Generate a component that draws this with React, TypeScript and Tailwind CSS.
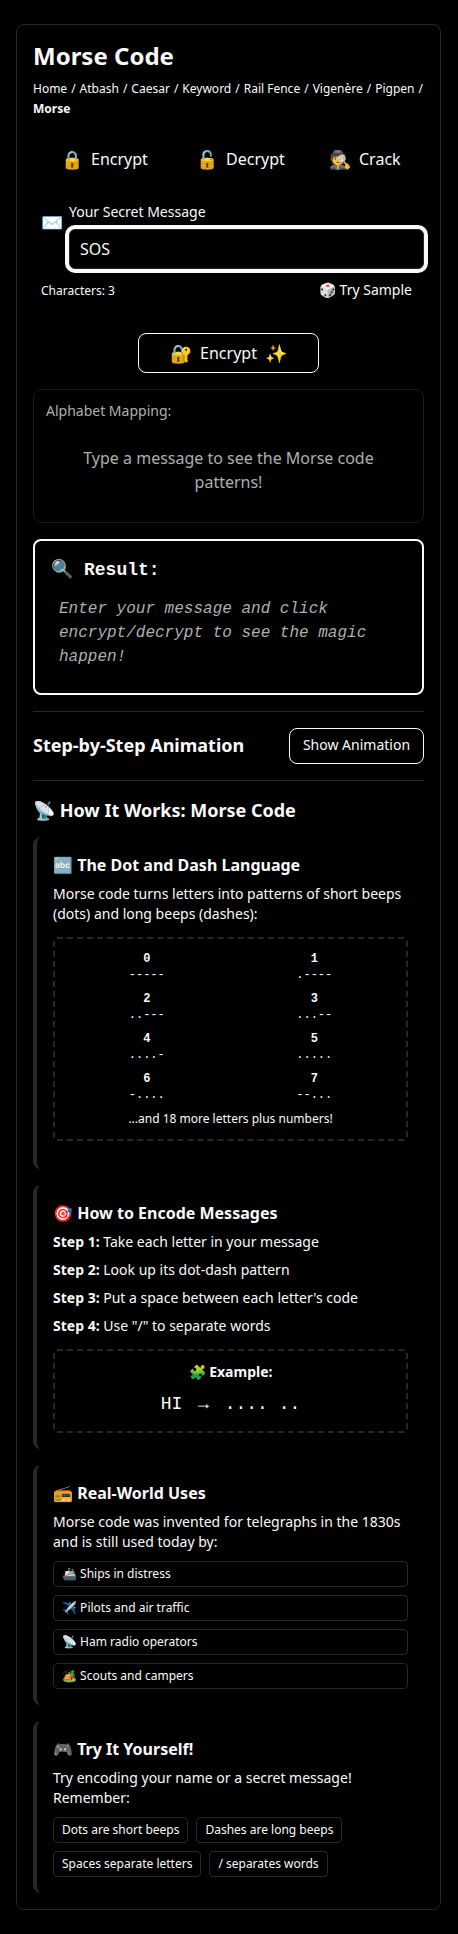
import type { ReactNode } from "react";

const crumbs = ["Home", "Atbash", "Caesar", "Keyword", "Rail Fence", "Vigenère", "Pigpen"];

const digits = [
  ["0", "-----"],
  ["1", ".----"],
  ["2", "..---"],
  ["3", "...--"],
  ["4", "....-"],
  ["5", "....."],
  ["6", "-...."],
  ["7", "--..."],
];

const steps = [
  "Take each letter in your message",
  "Look up its dot-dash pattern",
  "Put a space between each letter's code",
  'Use "/" to separate words',
];

const uses = ["🚢 Ships in distress", "✈️ Pilots and air traffic", "📡 Ham radio operators", "🏕️ Scouts and campers"];

const tips = ["Dots are short beeps", "Dashes are long beeps", "Spaces separate letters", "/ separates words"];

const mono = "font-['Liberation_Mono',monospace]";

function Section({ title, className = "mt-4 pb-4", children }: { title: string; className?: string; children: ReactNode }) {
  return (
    <section className={`rounded-lg border-l-4 border-[#27272a] px-4 pt-4 ${className}`}>
      <h4 className="mb-[7px] text-base leading-6 font-bold">{title}</h4>
      {children}
    </section>
  );
}

export default function App() {
  return (
    <div className="min-h-[1934px] bg-black pt-6 font-['Noto_Sans',sans-serif] text-[#fafafa]">
      <main className="ml-4 h-[1886px] w-[425px] rounded-lg border border-[#27272a] px-4 pt-4">
        <h1 className="text-2xl leading-[30px] font-bold">Morse Code</h1>
        <nav className="mt-2 flex flex-wrap gap-x-1 text-xs leading-5">
          {crumbs.map((c) => (
            <span key={c} className="flex gap-x-1">
              <a>{c}</a>
              <span>/</span>
            </span>
          ))}
          <strong>Morse</strong>
        </nav>

        <div className="mt-5 flex h-10 items-center">
          <button className="ml-7 flex w-[135px] items-center gap-2">
            <span className="text-lg leading-6">🔒</span>
            <span>Encrypt</span>
          </button>
          <button className="flex w-[133px] items-center gap-2">
            <span className="text-lg leading-6">🔓</span>
            <span>Decrypt</span>
          </button>
          <button className="flex items-center gap-2">
            <span className="text-lg leading-6">🕵️</span>
            <span>Crack</span>
          </button>
        </div>

        <div className="mt-[23px] flex">
          <span className="mt-2 ml-2 w-7 text-lg leading-6">✉️</span>
          <div className="flex-1">
            <label className="block text-sm leading-5">Your Secret Message</label>
            <input
              className="mt-[7px] block h-10 w-full rounded-md border border-[#27272a] bg-black px-2.5 text-base ring-4 ring-[#fafafa] outline-none"
              defaultValue="SOS"
            />
          </div>
        </div>

        <div className="mt-[11px] flex items-center justify-between pr-3 pl-2">
          <span className="pt-0.5 text-xs">Characters: 3</span>
          <button className="text-sm leading-5">🎲 Try Sample</button>
        </div>

        <button className="mx-auto mt-[33px] flex h-10 w-[181px] items-center justify-center gap-2 rounded-lg border border-[#fafafa]">
          <span className="text-lg leading-6">🔐</span>
          <span>Encrypt</span>
          <span className="text-lg leading-6">✨</span>
        </button>

        <div className="mt-4 h-[134px] rounded-lg border border-[#1b1b1d] px-3 pt-[11px] text-[#afafaf]">
          <p className="text-sm leading-5">Alphabet Mapping:</p>
          <p className="mx-8 mt-[25px] text-center text-base leading-6">Type a message to see the Morse code patterns!</p>
        </div>

        <div className={`mt-4 h-[156px] rounded-lg border-2 border-[#fafafa] px-4 pt-[15px] ${mono}`}>
          <h3 className="flex items-center gap-[11px] text-lg leading-7 font-bold">
            <span>🔍</span>
            <span>Result:</span>
          </h3>
          <p className="mt-[13px] px-2 text-base leading-6 text-[#afafaf] italic">
            Enter your message and click encrypt/decrypt to see the magic happen!
          </p>
        </div>

        <div className="mt-4 flex h-[70px] items-center justify-between border-y border-[#27272a]">
          <h3 className="pb-0.5 text-lg leading-7 font-bold">Step-by-Step Animation</h3>
          <button className="h-9 w-[135px] rounded-lg border border-[#fafafa] pb-0.5 text-sm leading-5">
            Show Animation
          </button>
        </div>

        <h3 className="mt-[15px] text-lg leading-7 font-bold">📡 How It Works: Morse Code</h3>

        <Section title="🔤 The Dot and Dash Language" className="mt-[13px] pb-7">
          <p className="text-sm leading-5">
            Morse code turns letters into patterns of short beeps (dots) and long beeps (dashes):
          </p>
          <div className="mt-[13px] rounded-sm border-2 border-dashed border-[#27272a] p-3 text-center text-xs leading-4">
            <div className={`grid grid-cols-2 gap-2 ${mono}`}>
              {digits.map(([digit, code]) => (
                <div key={digit}>
                  <strong className="block">{digit}</strong>
                  <span className="block">{code}</span>
                </div>
              ))}
            </div>
            <p className="mt-2">...and 18 more letters plus numbers!</p>
          </div>
        </Section>

        <Section title="🎯 How to Encode Messages">
          {steps.map((step, i) => (
            <p key={step} className="mb-2 text-sm leading-5">
              <strong>Step {i + 1}:</strong> {step}
            </p>
          ))}
          <div className="mt-[13px] rounded-sm border-2 border-dashed border-[#27272a] px-3 pt-[11px] pb-[13px] text-center">
            <p className="text-sm leading-5 font-bold">🧩 Example:</p>
            <p className={`mt-2 text-lg leading-7 ${mono}`}>
              HI <span className="mx-[5px]">→</span> .... ..
            </p>
          </div>
        </Section>

        <Section title="📻 Real-World Uses">
          <p className="text-sm leading-5">
            Morse code was invented for telegraphs in the 1830s and is still used today by:
          </p>
          <ul className="mt-[9px] flex flex-col gap-2">
            {uses.map((use) => (
              <li key={use} className="rounded-sm border border-[#27272a] px-2 py-1 text-xs leading-4">
                {use}
              </li>
            ))}
          </ul>
        </Section>

        <Section title="🎮 Try It Yourself!">
          <p className="text-sm leading-5">Try encoding your name or a secret message! Remember:</p>
          <ul className="mt-[9px] flex flex-wrap gap-2">
            {tips.map((tip) => (
              <li key={tip} className="rounded-sm border border-[#27272a] px-2 py-1 text-xs leading-4">
                {tip}
              </li>
            ))}
          </ul>
        </Section>
      </main>
    </div>
  );
}
